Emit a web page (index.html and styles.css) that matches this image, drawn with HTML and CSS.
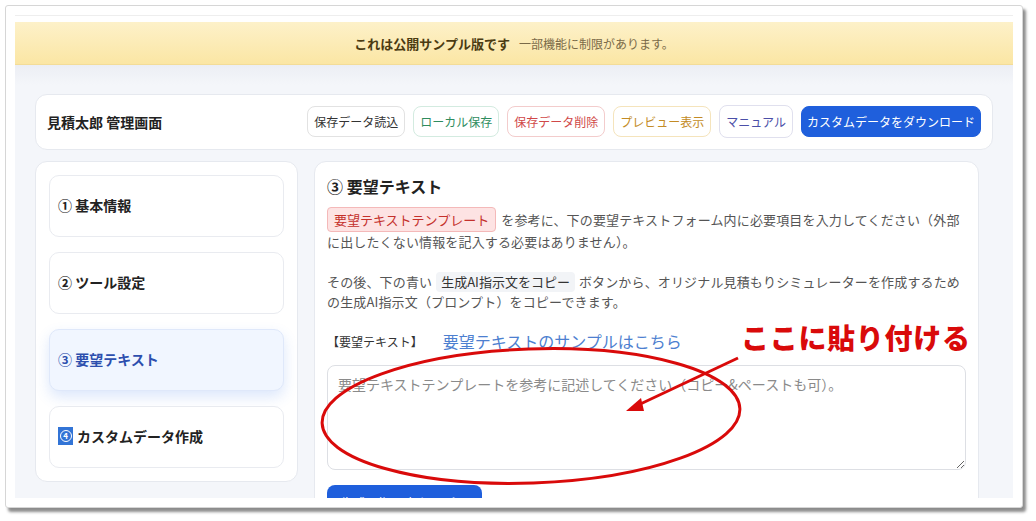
FILE: index.html
```html
<!DOCTYPE html>
<html lang="ja">
<head>
    <meta charset="UTF-8">
    <meta name="viewport" content="width=device-width, initial-scale=1.0">
    <title>見積太郎 管理画面</title>
    <link rel="stylesheet" href="styles.css">
</head>
<body>
    <div class="frame">
        <div class="screen">
            <div class="top-strip"></div>
            <div class="notice">
                <strong>これは公開サンプル版です</strong>
                <span>一部機能に制限があります。</span>
            </div>

            <div class="admin">
                <header class="toolbar">
                    <h1>見積太郎 管理画面</h1>
                    <div class="actions">
                        <button class="btn">保存データ読込</button>
                        <button class="btn btn-green">ローカル保存</button>
                        <button class="btn btn-red">保存データ削除</button>
                        <button class="btn btn-amber">プレビュー表示</button>
                        <button class="btn btn-indigo">マニュアル</button>
                        <button class="btn btn-primary">カスタムデータをダウンロード</button>
                    </div>
                </header>

                <div class="layout">
                    <nav class="steps">
                        <div class="step">① 基本情報</div>
                        <div class="step">② ツール設定</div>
                        <div class="step active">③ 要望テキスト</div>
                        <div class="step"><span class="keycap"><span class="keycap-ring">4</span></span>カスタムデータ作成</div>
                    </nav>

                    <section class="panel">
                        <h2>③ 要望テキスト</h2>
                        <p class="lead">
                            <span class="line"><span class="badge">要望テキストテンプレート</span><span class="after-badge">を参考に、下の要望テキストフォーム内に必要項目を入力してください（外部</span></span>
                            <span class="line">に出したくない情報を記入する必要はありません）。</span>
                        </p>
                        <p class="lead">
                            <span class="line">その後、下の青い<code>生成AI指示文をコピー</code>ボタンから、オリジナル見積もりシミュレーターを作成するため</span>
                            <span class="line">の生成AI指示文（プロンプト）をコピーできます。</span>
                        </p>

                        <div class="field-label">
                            <span>【要望テキスト】</span>
                            <a href="#">要望テキストのサンプルはこちら</a>
                        </div>
                        <textarea placeholder="要望テキストテンプレートを参考に記述してください（コピー&amp;ペーストも可）。"></textarea>
                        <button class="btn-copy">生成AI指示文をコピー</button>
                    </section>
                </div>
            </div>
        </div>
    </div>

    <!-- red hand-drawn note over the screenshot -->
    <svg class="marks" width="1036" height="521" viewBox="0 0 1036 521">
        <ellipse cx="531" cy="416" rx="209" ry="67" transform="rotate(-2 531 416)" fill="none" stroke="#d90a0a" stroke-width="3"/>
        <line x1="738" y1="358" x2="634" y2="407" stroke="#d90a0a" stroke-width="3"/>
        <path d="M626 411 L641 398 L644 411 Z" fill="#d90a0a"/>
    </svg>
    <div class="note">ここに貼り付ける</div>
</body>
</html>
```

FILE: styles.css
```css
:root {
    --page-bg: #f4f6fa;
    --card-border: #e6e9ef;
    --text: #222222;
    --muted: #555555;
    --blue: #1f5fdc;
    --red-note: #d90a0a;
}

* {
    box-sizing: border-box;
}

body {
    margin: 0;
    background: #ffffff;
    font-family: "Noto Sans CJK JP", "Noto Sans", sans-serif;
    color: var(--text);
    position: relative;
    width: 1036px;
    height: 521px;
    overflow: hidden;
}

.frame {
    margin: 5px 0 0 5px;
    width: 1018px;
    height: 503px;
    padding: 9px;
    background: #ffffff;
    border: 1px solid #d6d6d6;
    border-radius: 3px;
    box-shadow: 3px 4px 3px rgba(0, 0, 0, 0.45);
}

.screen {
    height: 100%;
    overflow: hidden;
    background: var(--page-bg);
}

.top-strip {
    height: 7px;
    background: #ffffff;
    border-top: 1px solid #eeeeee;
}

.notice {
    height: 43px;
    display: flex;
    align-items: center;
    justify-content: center;
    gap: 9px;
    background: linear-gradient(#fdf1c9, #fbe6a4);
    border-bottom: 1px solid #f3dc98;
    font-size: 12px;
    color: #7a6a48;
}

.notice strong {
    font-size: 13px;
    color: #4b3b12;
}

.admin {
    padding: 29px 20px 0;
    background: linear-gradient(#eceef4, var(--page-bg) 20px);
}

.toolbar {
    height: 56px;
    display: flex;
    align-items: center;
    justify-content: space-between;
    padding: 0 11px 0 11px;
    background: #ffffff;
    border: 1px solid var(--card-border);
    border-radius: 12px;
}

.toolbar h1 {
    margin: 0;
    font-size: 14px;
    font-weight: bold;
}

.actions {
    display: flex;
    gap: 8px;
}

.btn {
    height: 31px;
    padding: 0 6px;
    font-family: inherit;
    font-size: 12px;
    color: #333333;
    background: #ffffff;
    border: 1px solid #e2e2e2;
    border-radius: 8px;
}

.btn-green {
    color: #2f8c5e;
    border-color: #d3ebe0;
}

.btn-red {
    color: #d04848;
    border-color: #f3cccc;
}

.btn-amber {
    color: #c38b25;
    border-color: #f5e4bc;
}

.btn-indigo {
    color: #4b4fa8;
    border-color: #e0e0ee;
    height: 33px;
    margin-top: -1px;
}

.btn-primary {
    padding: 0 5px;
    color: #ffffff;
    background: var(--blue);
    border-color: var(--blue);
}

.layout {
    display: grid;
    grid-template-columns: 263px 665px;
    gap: 16px;
    margin-top: 11px;
}

.steps {
    display: flex;
    flex-direction: column;
    gap: 15px;
    padding: 13px;
    background: #ffffff;
    border: 1px solid var(--card-border);
    border-radius: 12px;
    align-self: start;
}

.step {
    height: 62px;
    display: flex;
    align-items: center;
    padding: 0 0 3px 8px;
    font-size: 14px;
    font-weight: bold;
    background: #ffffff;
    border: 1px solid #e9ebf0;
    border-radius: 10px;
}

.step.active {
    color: #2d4fae;
    background: #f1f6ff;
    border-color: #dfe8fa;
    box-shadow: 0 6px 14px rgba(60, 120, 235, 0.18);
}

.keycap {
    display: inline-flex;
    align-items: center;
    justify-content: center;
    width: 15px;
    height: 18px;
    margin-right: 4px;
    background: #3274d6;
}

.keycap-ring {
    display: flex;
    align-items: center;
    justify-content: center;
    width: 12px;
    height: 12px;
    font-size: 8px;
    line-height: 1;
    color: #ffffff;
    border: 1.5px solid #ffffff;
    border-radius: 50%;
}

.panel {
    height: 360px;
    padding: 12px;
    background: #ffffff;
    border: 1px solid var(--card-border);
    border-radius: 12px;
}

.panel h2 {
    margin: 0;
    font-size: 16px;
    line-height: 24px;
    font-weight: bold;
}

.lead {
    margin: 9px 0 20px;
    font-size: 13px;
    line-height: 20px;
    letter-spacing: 0.15px;
    color: var(--muted);
}

.lead + .lead {
    margin-bottom: 0;
}

.line {
    display: flex;
    align-items: center;
    white-space: nowrap;
}

.badge {
    height: 25px;
    line-height: 23px;
    padding: 0 6px;
    color: #c4302b;
    background: #fde3e3;
    border: 1px solid #f4b9b9;
    border-radius: 4px;
    letter-spacing: 0;
}

.after-badge {
    margin-left: 5px;
}

code {
    margin: 0 4px;
    padding: 0 5px;
    line-height: 20px;
    font-family: inherit;
    color: #333333;
    background: #f2f4f7;
    border-radius: 4px;
    letter-spacing: 0;
}

.field-label {
    display: flex;
    align-items: center;
    gap: 20px;
    height: 24px;
    margin-top: 17px;
    font-size: 12px;
    color: #333333;
}

.field-label a {
    font-size: 16px;
    color: #4d7fd0;
    text-decoration: none;
}

textarea {
    display: block;
    width: 100%;
    height: 105px;
    margin-top: 12px;
    padding: 8px 10px;
    font-family: inherit;
    font-size: 14px;
    border: 1px solid #dddfe4;
    border-radius: 8px;
}

textarea::placeholder {
    color: #8a8a8a;
}

.btn-copy {
    margin-top: 15px;
    width: 155px;
    height: 34px;
    font-family: inherit;
    font-size: 13px;
    color: #ffffff;
    background: var(--blue);
    border: none;
    border-radius: 8px;
}

.marks {
    position: absolute;
    left: 0;
    top: 0;
    pointer-events: none;
}

.note {
    position: absolute;
    left: 741px;
    top: 318px;
    font-size: 28px;
    font-weight: 900;
    line-height: 38px;
    letter-spacing: 0.7px;
    color: var(--red-note);
}
```
